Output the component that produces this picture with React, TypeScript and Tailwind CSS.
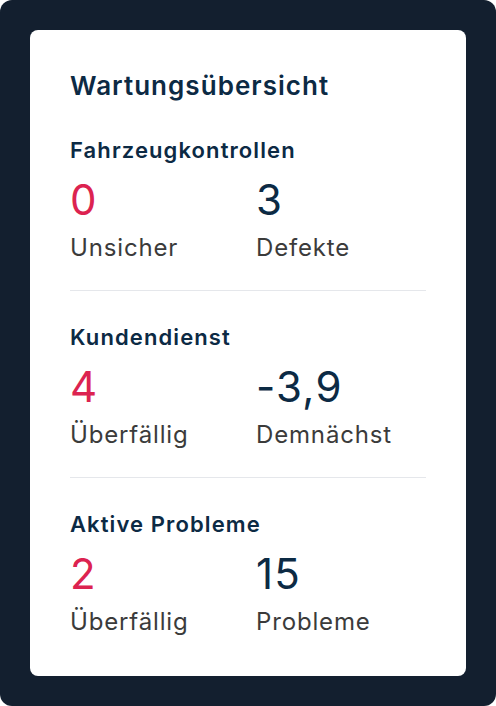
const sections = [
  {
    title: "Fahrzeugkontrollen",
    stats: [
      { value: "0", label: "Unsicher", alert: true },
      { value: "3", label: "Defekte", alert: false },
    ],
  },
  {
    title: "Kundendienst",
    stats: [
      { value: "4", label: "Überfällig", alert: true },
      { value: "-3,9", label: "Demnächst", alert: false },
    ],
  },
  {
    title: "Aktive Probleme",
    stats: [
      { value: "2", label: "Überfällig", alert: true },
      { value: "15", label: "Probleme", alert: false },
    ],
  },
];

export default function App() {
  return (
    <div className="w-[496px] h-[706px] bg-white font-['Inter',_'Liberation_Sans',_sans-serif]">
      <div className="w-full h-full bg-[#131f2f] rounded-[12px] p-[30px]">
        <div className="bg-white rounded-[8px] h-[646px] px-10 pt-10">
          <h1 className="text-[26px] leading-[32px] tracking-[0.04em] font-semibold text-[#0c2a44]">
            Wartungsübersicht
          </h1>

          <div className="mt-[34px] flex flex-col">
            {sections.map((s, i) => (
              <div key={s.title}>
                {i > 0 && <div className="h-px bg-[#e5e7eb] mt-[26px] mb-[32px]" />}
                <h2 className="text-[22px] leading-[28px] tracking-[0.05em] font-semibold text-[#0c2a44]">
                  {s.title}
                </h2>
                <div className="grid grid-cols-2 gap-4 mt-3">
                  {s.stats.map((st) => (
                    <div key={st.label + st.value}>
                      <div
                        className={
                          "text-[42px] leading-[48px] tracking-[0.03em] " +
                          (st.alert ? "text-[#dc2350]" : "text-[#0c2a44]")
                        }
                      >
                        {st.value}
                      </div>
                      <div className="mt-2 text-[24px] leading-[32px] tracking-[0.035em] text-[#3b3b3b]">
                        {st.label}
                      </div>
                    </div>
                  ))}
                </div>
              </div>
            ))}
          </div>
        </div>
      </div>
    </div>
  );
}
